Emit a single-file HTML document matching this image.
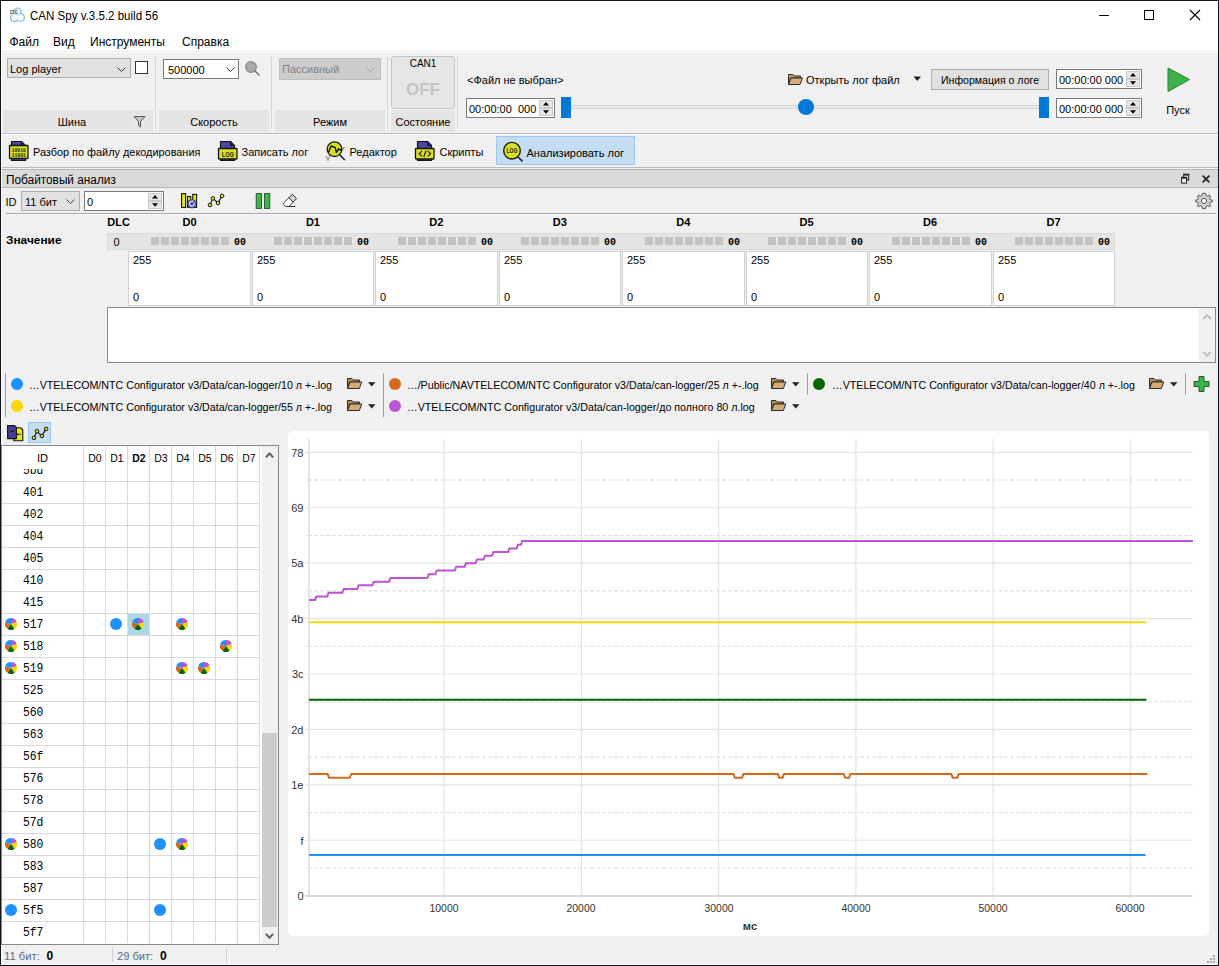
<!DOCTYPE html>
<html><head><meta charset="utf-8"><title>CAN Spy</title>
<style>
html,body{margin:0;padding:0;}
body{width:1219px;height:966px;position:relative;overflow:hidden;background:#10161c;font-family:"Liberation Sans", sans-serif;color:#000;}
.r{position:absolute;}
.t{position:absolute;white-space:pre;}
</style></head><body>

<div class="r" style="left:1px;top:1px;width:1217px;height:964px;background:#f0f0f0;"></div>
<div class="r" style="left:1px;top:1px;width:1217px;height:50px;background:#ffffff;"></div>
<div class="r" style="left:1px;top:51px;width:1217px;height:1px;background:#e9e9e9;"></div>
<div class="r" style="left:1px;top:52px;width:1217px;height:1px;background:#fcfcfc;"></div>
<svg class="r" style="left:8px;top:6px;" width="18" height="18" viewBox="0 0 18 18"><g fill="none" stroke="#6cb8ea" stroke-width="1.4">
<circle cx="9.4" cy="5.6" r="3.5"/><circle cx="6.5" cy="11.4" r="3.9"/><circle cx="12.4" cy="11.4" r="3.8"/></g>
<g fill="#fff"><circle cx="9.4" cy="5.6" r="2.8"/><circle cx="6.5" cy="11.4" r="3.2"/><circle cx="12.4" cy="11.4" r="3.1"/></g>
<text x="1.7" y="8.4" font-family="Liberation Sans" font-weight="bold" font-size="5.6" fill="#3a3a3a" stroke="#fff" stroke-width="0.6" paint-order="stroke" textLength="8.2" lengthAdjust="spacingAndGlyphs">CFG</text></svg>
<div class="t" style="left:30.00px;top:10.00px;font-size:12px;line-height:12px;transform:scaleX(0.962);transform-origin:0 0;">CAN Spy v.3.5.2 build 56</div>
<div class="r" style="left:1099px;top:15px;width:10px;height:1px;background:#000;"></div>
<div class="r" style="left:1144px;top:10px;width:10px;height:10px;border:1px solid #000;box-sizing:border-box;"></div>
<svg class="r" style="left:1189px;top:9px;" width="12" height="12" viewBox="0 0 12 12"><path d="M1 1 L11 11 M11 1 L1 11" stroke="#000" stroke-width="1.1"/></svg>
<div class="t" style="left:9.50px;top:36.00px;font-size:12px;line-height:12px;">Файл</div>
<div class="t" style="left:53.00px;top:36.00px;font-size:12px;line-height:12px;">Вид</div>
<div class="t" style="left:90.00px;top:36.00px;font-size:12px;line-height:12px;">Инструменты</div>
<div class="t" style="left:182.00px;top:36.00px;font-size:12px;line-height:12px;">Справка</div>
<div class="r" style="left:3px;top:110px;width:150px;height:22px;background:#e4e4e4;"></div>
<div class="t" style="left:72.00px;top:117.00px;font-size:11px;line-height:11px;transform:translateX(-50%);">Шина</div>
<div class="r" style="left:159px;top:110px;width:110px;height:22px;background:#e4e4e4;"></div>
<div class="t" style="left:214.00px;top:117.00px;font-size:11px;line-height:11px;transform:translateX(-50%);">Скорость</div>
<div class="r" style="left:275px;top:110px;width:110px;height:22px;background:#e4e4e4;"></div>
<div class="t" style="left:330.00px;top:117.00px;font-size:11px;line-height:11px;transform:translateX(-50%);">Режим</div>
<div class="r" style="left:391px;top:110px;width:64px;height:22px;background:#e4e4e4;"></div>
<div class="t" style="left:423.00px;top:117.00px;font-size:11px;line-height:11px;transform:translateX(-50%);">Состояние</div>
<div class="r" style="left:155px;top:57px;width:1px;height:72px;background:#d5d5d5;"></div>
<div class="r" style="left:271px;top:57px;width:1px;height:72px;background:#d5d5d5;"></div>
<div class="r" style="left:387px;top:57px;width:1px;height:72px;background:#d5d5d5;"></div>
<div class="r" style="left:457px;top:57px;width:1px;height:70px;background:#d5d5d5;"></div>
<div class="r" style="left:1px;top:133px;width:1217px;height:1px;background:#b9b9b9;"></div>
<div class="r" style="left:7px;top:58px;width:124px;height:20px;background:#e1e1e1;border:1px solid #adadad;box-sizing:border-box;"></div>
<div class="t" style="left:10.00px;top:64.00px;font-size:11px;line-height:11px;">Log player</div>
<svg class="r" style="left:117px;top:67px;" width="9" height="5" viewBox="0 0 9 5"><path d="M0.5 0.5 L4.5 4.5 L8.5 0.5" fill="none" stroke="#333" stroke-width="1"/></svg>
<div class="r" style="left:135px;top:61px;width:13px;height:13px;background:#fff;border:1px solid #333;box-sizing:border-box;"></div>
<div class="r" style="left:133px;top:114px;width:12px;height:13px;background:#e9e9e9;"></div>
<svg class="r" style="left:133px;top:115px;" width="13" height="13" viewBox="0 0 13 13"><path d="M1 1.5 H12 L7.5 6.5 V12 L5.5 10.5 V6.5 Z" fill="#c8c8c8" stroke="#555" stroke-width="1" stroke-linejoin="round"/></svg>
<div class="r" style="left:163px;top:59px;width:76px;height:20px;background:#fff;border:1px solid #7a7a7a;box-sizing:border-box;"></div>
<div class="t" style="left:168.00px;top:65.00px;font-size:11px;line-height:11px;">500000</div>
<svg class="r" style="left:226px;top:67px;" width="9" height="5" viewBox="0 0 9 5"><path d="M0.5 0.5 L4.5 4.5 L8.5 0.5" fill="none" stroke="#333" stroke-width="1"/></svg>
<svg class="r" style="left:244px;top:60px;" width="17" height="17" viewBox="0 0 17 17"><circle cx="7" cy="7" r="5.3" fill="#a9a9a9" stroke="#8a8a8a" stroke-width="1.2"/><path d="M10.8 10.8 L15.5 15.5" stroke="#777" stroke-width="1.6"/></svg>
<div class="r" style="left:279px;top:58px;width:102px;height:22px;background:#cccccc;border:1px solid #bfbfbf;box-sizing:border-box;"></div>
<div class="t" style="left:282.00px;top:64.00px;font-size:11px;line-height:11px;color:#838383;">Пассивный</div>
<svg class="r" style="left:366px;top:67px;" width="9" height="5" viewBox="0 0 9 5"><path d="M0.5 0.5 L4.5 4.5 L8.5 0.5" fill="none" stroke="#a8a8a8" stroke-width="1"/></svg>
<div class="r" style="left:391px;top:56px;width:64px;height:53px;background:#e6e6e6;border:1px solid #c4c4c4;box-sizing:border-box;border-radius:3px;"></div>
<div class="t" style="left:423.00px;top:59.00px;font-size:10px;line-height:10px;transform:translateX(-50%);">CAN1</div>
<div class="t" style="left:423.00px;top:81.00px;font-size:17px;line-height:17px;font-weight:700;color:#c4c4c4;transform:translateX(-50%);">OFF</div>
<div class="t" style="left:467.00px;top:75.00px;font-size:11px;line-height:11px;">&lt;Файл не выбран&gt;</div>
<div class="r" style="left:466px;top:98px;width:89px;height:20px;background:#fff;border:1px solid #7a7a7a;box-sizing:border-box;"></div>
<div class="t" style="left:469.00px;top:104.00px;font-size:11px;line-height:11px;">00:00:00  000</div>
<div class="r" style="left:539px;top:100px;width:14px;height:8px;background:#e6e6e6;border:1px solid #cacaca;box-sizing:border-box;"></div>
<div class="r" style="left:539px;top:108px;width:14px;height:8px;background:#e6e6e6;border:1px solid #cacaca;box-sizing:border-box;"></div>
<svg class="r" style="left:543px;top:102px;" width="6" height="4" viewBox="0 0 6 4"><path d="M0 3.5 L3 0 L6 3.5 Z" fill="#000"/></svg>
<svg class="r" style="left:543px;top:109.5px;" width="6" height="4" viewBox="0 0 6 4"><path d="M0 0.3 L3 3.8 L6 0.3 Z" fill="#000"/></svg>
<div class="r" style="left:571px;top:105px;width:468px;height:4px;background:#e7eaea;border:1px solid #d6d6d6;box-sizing:border-box;"></div>
<div class="r" style="left:561px;top:97px;width:10px;height:21px;background:#0078d7;"></div>
<div class="r" style="left:1039px;top:97px;width:10px;height:21px;background:#0078d7;"></div>
<div class="r" style="left:798px;top:99px;width:16px;height:16px;background:#0078d7;border-radius:50%;"></div>
<svg class="r" style="left:787px;top:72px;" width="17" height="14" viewBox="0 0 17 14"><path d="M1.5 2.5 H6 L7.5 4 H13.5 V6 H3.5 L1.5 12.5 Z" fill="#c69a66" stroke="#2b2b2b" stroke-width="1" stroke-linejoin="round"/><path d="M1.5 12.5 L4 6 H15.5 L13 12.5 Z" fill="#d9ac78" stroke="#2b2b2b" stroke-width="1" stroke-linejoin="round"/></svg>
<div class="t" style="left:806.00px;top:75.00px;font-size:11px;line-height:11px;">Открыть лог файл</div>
<svg class="r" style="left:913px;top:76px;" width="9" height="6" viewBox="0 0 9 6"><path d="M0.5 0.5 H8 L4.25 5 Z" fill="#222"/></svg>
<div class="r" style="left:931px;top:69px;width:118px;height:21px;background:#e1e1e1;border:1px solid #adadad;box-sizing:border-box;"></div>
<div class="t" style="left:989.50px;top:75.00px;font-size:11px;line-height:11px;transform:translateX(-50%) scaleX(0.96);">Информация о логе</div>
<div class="r" style="left:1056px;top:69px;width:86px;height:20px;background:#fff;border:1px solid #7a7a7a;box-sizing:border-box;"></div>
<div class="t" style="left:1059.00px;top:75.00px;font-size:11px;line-height:11px;">00:00:00 000</div>
<div class="r" style="left:1126px;top:71px;width:14px;height:8px;background:#e6e6e6;border:1px solid #cacaca;box-sizing:border-box;"></div>
<div class="r" style="left:1126px;top:79px;width:14px;height:8px;background:#e6e6e6;border:1px solid #cacaca;box-sizing:border-box;"></div>
<svg class="r" style="left:1130px;top:73px;" width="6" height="4" viewBox="0 0 6 4"><path d="M0 3.5 L3 0 L6 3.5 Z" fill="#000"/></svg>
<svg class="r" style="left:1130px;top:80.5px;" width="6" height="4" viewBox="0 0 6 4"><path d="M0 0.3 L3 3.8 L6 0.3 Z" fill="#000"/></svg>
<div class="r" style="left:1056px;top:98px;width:86px;height:20px;background:#fff;border:1px solid #7a7a7a;box-sizing:border-box;"></div>
<div class="t" style="left:1059.00px;top:104.00px;font-size:11px;line-height:11px;">00:00:00 000</div>
<div class="r" style="left:1126px;top:100px;width:14px;height:8px;background:#e6e6e6;border:1px solid #cacaca;box-sizing:border-box;"></div>
<div class="r" style="left:1126px;top:108px;width:14px;height:8px;background:#e6e6e6;border:1px solid #cacaca;box-sizing:border-box;"></div>
<svg class="r" style="left:1130px;top:102px;" width="6" height="4" viewBox="0 0 6 4"><path d="M0 3.5 L3 0 L6 3.5 Z" fill="#000"/></svg>
<svg class="r" style="left:1130px;top:109.5px;" width="6" height="4" viewBox="0 0 6 4"><path d="M0 0.3 L3 3.8 L6 0.3 Z" fill="#000"/></svg>
<svg class="r" style="left:1166px;top:66px;" width="26" height="28" viewBox="0 0 26 28"><path d="M2 2 L23.5 13.5 L2 25.5 Z" fill="#3cb34a" stroke="#2e7d32" stroke-width="1" stroke-linejoin="round"/></svg>
<div class="t" style="left:1178.00px;top:105.00px;font-size:11px;line-height:11px;transform:translateX(-50%);">Пуск</div>
<div class="r" style="left:1px;top:134px;width:1217px;height:1px;background:#ffffff;"></div>
<div class="r" style="left:1px;top:167px;width:1217px;height:1px;background:#b9b9b9;"></div>
<div class="r" style="left:1px;top:168px;width:1217px;height:1px;background:#f4f4f4;"></div>
<svg class="r" style="left:8px;top:140px;" width="22" height="22" viewBox="0 0 22 22"><path d="M3.5 1.5 H13.5 L17.5 5.5 V20.5 H3.5 Z" fill="#4a479c" stroke="#141414" stroke-width="1.2" stroke-linejoin="round"/>
<path d="M13.5 1.5 V5.5 H17.5" fill="#222266" stroke="#141414" stroke-width="1"/>
<rect x="1.5" y="5.5" width="18.5" height="13" fill="#d8de1f" stroke="#141414" stroke-width="1.3" rx="0.5"/><text x="10.75" y="11.6" text-anchor="middle" font-family="Liberation Mono" font-weight="bold" font-size="5.5" fill="#222" textLength="14" lengthAdjust="spacingAndGlyphs">10010</text><text x="10.75" y="16.8" text-anchor="middle" font-family="Liberation Mono" font-weight="bold" font-size="5.5" fill="#222" textLength="14" lengthAdjust="spacingAndGlyphs">11001</text></svg>
<div class="t" style="left:32.50px;top:147.00px;font-size:11px;line-height:11px;transform:scaleX(0.99);transform-origin:0 0;">Разбор по файлу декодирования</div>
<svg class="r" style="left:217px;top:140px;" width="22" height="22" viewBox="0 0 22 22"><path d="M3.5 1.5 H13.5 L17.5 5.5 V20.5 H3.5 Z" fill="#4a479c" stroke="#141414" stroke-width="1.2" stroke-linejoin="round"/>
<path d="M13.5 1.5 V5.5 H17.5" fill="#222266" stroke="#141414" stroke-width="1"/>
<rect x="1.5" y="8.5" width="18.5" height="10.5" fill="#d8de1f" stroke="#141414" stroke-width="1.3" rx="0.5"/><text x="10.75" y="17" text-anchor="middle" font-family="Liberation Sans" font-weight="bold" font-size="7" fill="#222" textLength="12" lengthAdjust="spacingAndGlyphs">LOG</text></svg>
<div class="t" style="left:241.50px;top:147.00px;font-size:11px;line-height:11px;">Записать лог</div>
<svg class="r" style="left:322px;top:138px;" width="26" height="26" viewBox="0 0 26 26"><path d="M4 18 L6 22 L8 17" fill="none" stroke="#9a9a9a" stroke-width="1.3"/>
<path d="M19 13 L22.5 9" fill="none" stroke="#9a9a9a" stroke-width="1.3"/>
<path d="M17.5 16.5 L22.8 22" stroke="#222" stroke-width="1.6"/>
<circle cx="12.5" cy="11.2" r="7.3" fill="#d9e021" stroke="#1a1a1a" stroke-width="1.3"/>
<path d="M6.3 14.5 L9.2 8 L13.4 9.6 L14.2 14.5 L16.7 11 L19.2 12" fill="none" stroke="#111" stroke-width="1.4" stroke-linejoin="round"/></svg>
<div class="t" style="left:349.50px;top:147.00px;font-size:11px;line-height:11px;">Редактор</div>
<svg class="r" style="left:414px;top:140px;" width="22" height="22" viewBox="0 0 22 22"><path d="M3.5 1.5 H13.5 L17.5 5.5 V20.5 H3.5 Z" fill="#4a479c" stroke="#141414" stroke-width="1.2" stroke-linejoin="round"/>
<path d="M13.5 1.5 V5.5 H17.5" fill="#222266" stroke="#141414" stroke-width="1"/>
<rect x="1.5" y="8.5" width="18.5" height="10.5" fill="#d8de1f" stroke="#141414" stroke-width="1.3" rx="0.5"/><path d="M8 11 L5.2 13.7 L8 16.4 M13.8 11 L16.6 13.7 L13.8 16.4 M12 10.5 L9.8 17" fill="none" stroke="#222" stroke-width="1.2"/></svg>
<div class="t" style="left:439.50px;top:147.00px;font-size:11px;line-height:11px;">Скрипты</div>
<div class="r" style="left:496px;top:136px;width:139px;height:29px;background:#c4ddf3;border:1px solid #99c9f2;box-sizing:border-box;"></div>
<svg class="r" style="left:499px;top:138px;" width="26" height="26" viewBox="0 0 26 26"><path d="M18 18 L23.5 23.3" stroke="#222" stroke-width="1.6"/>
<circle cx="13" cy="12.7" r="8.3" fill="#d9e021" stroke="#1a1a1a" stroke-width="1.4"/>
<text x="13" y="15.2" text-anchor="middle" font-family="Liberation Sans" font-weight="bold" font-size="6.5" fill="#222" textLength="11" lengthAdjust="spacingAndGlyphs">LOG</text></svg>
<div class="t" style="left:526.50px;top:148.00px;font-size:11px;line-height:11px;">Анализировать лог</div>
<div class="r" style="left:1px;top:169px;width:1217px;height:1px;background:#b4b4b4;"></div>
<div class="r" style="left:1px;top:170px;width:1217px;height:17px;background:#dadada;"></div>
<div class="r" style="left:1px;top:187px;width:1217px;height:1px;background:#b4b4b4;"></div>
<div class="t" style="left:6.40px;top:174.00px;font-size:12px;line-height:12px;transform:scaleX(0.985);transform-origin:0 0;">Побайтовый анализ</div>
<svg class="r" style="left:1180px;top:173px;" width="10" height="11" viewBox="0 0 10 11"><rect x="3.7" y="1.6" width="5" height="5.4" fill="none" stroke="#222" stroke-width="1"/><path d="M3.2 1.6 H9.2" stroke="#222" stroke-width="1.8"/><rect x="1.6" y="4.7" width="5" height="5.4" fill="#f2f2f2" stroke="#222" stroke-width="1"/><path d="M1.1 4.7 H7.1" stroke="#222" stroke-width="1.8"/></svg>
<svg class="r" style="left:1201px;top:174px;" width="10" height="10" viewBox="0 0 10 10"><path d="M1.6 1.6 L8.4 8.4 M8.4 1.6 L1.6 8.4" stroke="#222" stroke-width="1.7"/></svg>
<div class="t" style="left:5.50px;top:197.00px;font-size:11px;line-height:11px;">ID</div>
<div class="r" style="left:21px;top:191px;width:59px;height:20px;background:#e1e1e1;border:1px solid #adadad;box-sizing:border-box;"></div>
<div class="t" style="left:25.00px;top:197.00px;font-size:11px;line-height:11px;">11 бит</div>
<svg class="r" style="left:66px;top:199px;" width="9" height="5" viewBox="0 0 9 5"><path d="M0.5 0.5 L4.5 4.5 L8.5 0.5" fill="none" stroke="#444" stroke-width="1"/></svg>
<div class="r" style="left:84px;top:191px;width:80px;height:20px;background:#fff;border:1px solid #7a7a7a;box-sizing:border-box;"></div>
<div class="t" style="left:87.00px;top:197.00px;font-size:11px;line-height:11px;">0</div>
<div class="r" style="left:148px;top:193px;width:14px;height:8px;background:#e6e6e6;border:1px solid #cacaca;box-sizing:border-box;"></div>
<div class="r" style="left:148px;top:201px;width:14px;height:8px;background:#e6e6e6;border:1px solid #cacaca;box-sizing:border-box;"></div>
<svg class="r" style="left:152px;top:195px;" width="6" height="4" viewBox="0 0 6 4"><path d="M0 3.5 L3 0 L6 3.5 Z" fill="#000"/></svg>
<svg class="r" style="left:152px;top:202.5px;" width="6" height="4" viewBox="0 0 6 4"><path d="M0 0.3 L3 3.8 L6 0.3 Z" fill="#000"/></svg>
<svg class="r" style="left:178px;top:190px;" width="24" height="22" viewBox="0 0 24 22"><rect x="3.6" y="3.6" width="4" height="13.8" fill="#e8ea1a" stroke="#111" stroke-width="1.1"/>
<rect x="9.5" y="6.5" width="3.2" height="10.9" fill="#e8ea1a" stroke="#111" stroke-width="1.1"/>
<rect x="14.8" y="4.4" width="3.8" height="13" fill="#e8ea1a" stroke="#111" stroke-width="1.1"/>
<circle cx="13.9" cy="13.8" r="4.6" fill="#4545a8"/>
<path d="M16 12.6 A2.4 2.4 0 1 1 14.5 11.4" fill="none" stroke="#fff" stroke-width="1.1"/><path d="M13.8 10.3 L15.6 11.2 L14 12.6 Z" fill="#fff"/></svg>
<svg class="r" style="left:205px;top:192px;" width="22" height="17" viewBox="0 0 22 17"><path d="M5 13 L7.9 6.4 L13 11 L17.1 3.9" fill="none" stroke="#111" stroke-width="1.1"/>
<circle cx="5" cy="13" r="1.8" fill="#e8ea1a" stroke="#111" stroke-width="1"/>
<circle cx="7.9" cy="6.4" r="1.8" fill="#e8ea1a" stroke="#111" stroke-width="1"/>
<circle cx="13" cy="11" r="1.8" fill="#e8ea1a" stroke="#111" stroke-width="1"/>
<circle cx="17.1" cy="3.9" r="1.8" fill="#e8ea1a" stroke="#111" stroke-width="1"/></svg>
<svg class="r" style="left:250px;top:190px;" width="50" height="22" viewBox="0 0 50 22"><rect x="6.2" y="3.6" width="5.3" height="14.8" fill="#3cb84a" stroke="#2a4a2c" stroke-width="0.9"/>
<rect x="14.5" y="3.6" width="5.3" height="14.8" fill="#3cb84a" stroke="#2a4a2c" stroke-width="0.9"/>
<path d="M38.8 7.8 L42.3 4.3 L46.6 8.6 L43.1 12.1 Z" fill="#d0d0d0" stroke="#333" stroke-width="1"/>
<path d="M38.8 7.8 L33.7 12.9 Q33 13.6 33.7 14.5 L35.6 16.5 H39 L43.1 12.1 Z" fill="#fff" stroke="#333" stroke-width="1" stroke-linejoin="round"/>
<path d="M39 16.5 H45.5" stroke="#333" stroke-width="1"/></svg>
<svg class="r" style="left:1194px;top:191px;" width="20" height="20" viewBox="0 0 20 20"><path d="M10 2.2 L11.6 2.4 L12.1 4.6 L13.6 5.3 L15.5 4.1 L16.7 5.3 L15.5 7.2 L16.2 8.7 L18.4 9.2 V10.8 L16.2 11.3 L15.5 12.8 L16.7 14.7 L15.5 15.9 L13.6 14.7 L12.1 15.4 L11.6 17.6 H8.4 L7.9 15.4 L6.4 14.7 L4.5 15.9 L3.3 14.7 L4.5 12.8 L3.8 11.3 L1.6 10.8 V9.2 L3.8 8.7 L4.5 7.2 L3.3 5.3 L4.5 4.1 L6.4 5.3 L7.9 4.6 L8.4 2.4 Z" fill="#d2d2d2" stroke="#555" stroke-width="1" stroke-linejoin="round"/>
<circle cx="10" cy="10" r="2.6" fill="#fff" stroke="#555" stroke-width="1"/></svg>
<div class="r" style="left:6px;top:213px;width:1210px;height:1px;background:#a8a8a8;"></div>
<div class="r" style="left:6px;top:214px;width:1210px;height:1px;background:#fafafa;"></div>
<div class="t" style="left:107.30px;top:217.00px;font-size:11px;line-height:11px;font-weight:700;">DLC</div>
<div class="t" style="left:189.50px;top:217.00px;font-size:11px;line-height:11px;font-weight:700;transform:translateX(-50%);">D0</div>
<div class="t" style="left:312.93px;top:217.00px;font-size:11px;line-height:11px;font-weight:700;transform:translateX(-50%);">D1</div>
<div class="t" style="left:436.36px;top:217.00px;font-size:11px;line-height:11px;font-weight:700;transform:translateX(-50%);">D2</div>
<div class="t" style="left:559.79px;top:217.00px;font-size:11px;line-height:11px;font-weight:700;transform:translateX(-50%);">D3</div>
<div class="t" style="left:683.22px;top:217.00px;font-size:11px;line-height:11px;font-weight:700;transform:translateX(-50%);">D4</div>
<div class="t" style="left:806.65px;top:217.00px;font-size:11px;line-height:11px;font-weight:700;transform:translateX(-50%);">D5</div>
<div class="t" style="left:930.08px;top:217.00px;font-size:11px;line-height:11px;font-weight:700;transform:translateX(-50%);">D6</div>
<div class="t" style="left:1053.51px;top:217.00px;font-size:11px;line-height:11px;font-weight:700;transform:translateX(-50%);">D7</div>
<div class="t" style="left:6.00px;top:235.00px;font-size:11px;line-height:11px;font-weight:700;transform:scaleX(1.0793);transform-origin:0 0;">Значение</div>
<div class="r" style="left:107px;top:233px;width:1008px;height:17px;background:#e4e4e4;border:1px solid #dadada;box-sizing:border-box;"></div>
<div class="t" style="left:113.50px;top:237.00px;font-size:11px;line-height:11px;">0</div>
<div class="r" style="left:151px;top:237px;width:8px;height:8px;background:#c2c2c2;"></div>
<div class="r" style="left:161px;top:237px;width:8px;height:8px;background:#c2c2c2;"></div>
<div class="r" style="left:171px;top:237px;width:8px;height:8px;background:#c2c2c2;"></div>
<div class="r" style="left:181px;top:237px;width:8px;height:8px;background:#c2c2c2;"></div>
<div class="r" style="left:191px;top:237px;width:8px;height:8px;background:#c2c2c2;"></div>
<div class="r" style="left:201px;top:237px;width:8px;height:8px;background:#c2c2c2;"></div>
<div class="r" style="left:211px;top:237px;width:8px;height:8px;background:#c2c2c2;"></div>
<div class="r" style="left:221px;top:237px;width:8px;height:8px;background:#c2c2c2;"></div>
<div class="t" style="left:234.00px;top:237.00px;font-size:11px;line-height:11px;font-weight:700;font-family:'Liberation Mono', monospace;transform:scaleX(0.9089);transform-origin:0 0;">00</div>
<div class="r" style="left:274px;top:237px;width:8px;height:8px;background:#c2c2c2;"></div>
<div class="r" style="left:284px;top:237px;width:8px;height:8px;background:#c2c2c2;"></div>
<div class="r" style="left:294px;top:237px;width:8px;height:8px;background:#c2c2c2;"></div>
<div class="r" style="left:304px;top:237px;width:8px;height:8px;background:#c2c2c2;"></div>
<div class="r" style="left:314px;top:237px;width:8px;height:8px;background:#c2c2c2;"></div>
<div class="r" style="left:324px;top:237px;width:8px;height:8px;background:#c2c2c2;"></div>
<div class="r" style="left:334px;top:237px;width:8px;height:8px;background:#c2c2c2;"></div>
<div class="r" style="left:344px;top:237px;width:8px;height:8px;background:#c2c2c2;"></div>
<div class="t" style="left:357.00px;top:237.00px;font-size:11px;line-height:11px;font-weight:700;font-family:'Liberation Mono', monospace;transform:scaleX(0.9089);transform-origin:0 0;">00</div>
<div class="r" style="left:398px;top:237px;width:8px;height:8px;background:#c2c2c2;"></div>
<div class="r" style="left:408px;top:237px;width:8px;height:8px;background:#c2c2c2;"></div>
<div class="r" style="left:418px;top:237px;width:8px;height:8px;background:#c2c2c2;"></div>
<div class="r" style="left:428px;top:237px;width:8px;height:8px;background:#c2c2c2;"></div>
<div class="r" style="left:438px;top:237px;width:8px;height:8px;background:#c2c2c2;"></div>
<div class="r" style="left:448px;top:237px;width:8px;height:8px;background:#c2c2c2;"></div>
<div class="r" style="left:458px;top:237px;width:8px;height:8px;background:#c2c2c2;"></div>
<div class="r" style="left:468px;top:237px;width:8px;height:8px;background:#c2c2c2;"></div>
<div class="t" style="left:481.00px;top:237.00px;font-size:11px;line-height:11px;font-weight:700;font-family:'Liberation Mono', monospace;transform:scaleX(0.9089);transform-origin:0 0;">00</div>
<div class="r" style="left:521px;top:237px;width:8px;height:8px;background:#c2c2c2;"></div>
<div class="r" style="left:531px;top:237px;width:8px;height:8px;background:#c2c2c2;"></div>
<div class="r" style="left:541px;top:237px;width:8px;height:8px;background:#c2c2c2;"></div>
<div class="r" style="left:551px;top:237px;width:8px;height:8px;background:#c2c2c2;"></div>
<div class="r" style="left:561px;top:237px;width:8px;height:8px;background:#c2c2c2;"></div>
<div class="r" style="left:571px;top:237px;width:8px;height:8px;background:#c2c2c2;"></div>
<div class="r" style="left:581px;top:237px;width:8px;height:8px;background:#c2c2c2;"></div>
<div class="r" style="left:591px;top:237px;width:8px;height:8px;background:#c2c2c2;"></div>
<div class="t" style="left:604.00px;top:237.00px;font-size:11px;line-height:11px;font-weight:700;font-family:'Liberation Mono', monospace;transform:scaleX(0.9089);transform-origin:0 0;">00</div>
<div class="r" style="left:645px;top:237px;width:8px;height:8px;background:#c2c2c2;"></div>
<div class="r" style="left:655px;top:237px;width:8px;height:8px;background:#c2c2c2;"></div>
<div class="r" style="left:665px;top:237px;width:8px;height:8px;background:#c2c2c2;"></div>
<div class="r" style="left:675px;top:237px;width:8px;height:8px;background:#c2c2c2;"></div>
<div class="r" style="left:685px;top:237px;width:8px;height:8px;background:#c2c2c2;"></div>
<div class="r" style="left:695px;top:237px;width:8px;height:8px;background:#c2c2c2;"></div>
<div class="r" style="left:705px;top:237px;width:8px;height:8px;background:#c2c2c2;"></div>
<div class="r" style="left:715px;top:237px;width:8px;height:8px;background:#c2c2c2;"></div>
<div class="t" style="left:728.00px;top:237.00px;font-size:11px;line-height:11px;font-weight:700;font-family:'Liberation Mono', monospace;transform:scaleX(0.9089);transform-origin:0 0;">00</div>
<div class="r" style="left:768px;top:237px;width:8px;height:8px;background:#c2c2c2;"></div>
<div class="r" style="left:778px;top:237px;width:8px;height:8px;background:#c2c2c2;"></div>
<div class="r" style="left:788px;top:237px;width:8px;height:8px;background:#c2c2c2;"></div>
<div class="r" style="left:798px;top:237px;width:8px;height:8px;background:#c2c2c2;"></div>
<div class="r" style="left:808px;top:237px;width:8px;height:8px;background:#c2c2c2;"></div>
<div class="r" style="left:818px;top:237px;width:8px;height:8px;background:#c2c2c2;"></div>
<div class="r" style="left:828px;top:237px;width:8px;height:8px;background:#c2c2c2;"></div>
<div class="r" style="left:838px;top:237px;width:8px;height:8px;background:#c2c2c2;"></div>
<div class="t" style="left:851.00px;top:237.00px;font-size:11px;line-height:11px;font-weight:700;font-family:'Liberation Mono', monospace;transform:scaleX(0.9089);transform-origin:0 0;">00</div>
<div class="r" style="left:892px;top:237px;width:8px;height:8px;background:#c2c2c2;"></div>
<div class="r" style="left:902px;top:237px;width:8px;height:8px;background:#c2c2c2;"></div>
<div class="r" style="left:912px;top:237px;width:8px;height:8px;background:#c2c2c2;"></div>
<div class="r" style="left:922px;top:237px;width:8px;height:8px;background:#c2c2c2;"></div>
<div class="r" style="left:932px;top:237px;width:8px;height:8px;background:#c2c2c2;"></div>
<div class="r" style="left:942px;top:237px;width:8px;height:8px;background:#c2c2c2;"></div>
<div class="r" style="left:952px;top:237px;width:8px;height:8px;background:#c2c2c2;"></div>
<div class="r" style="left:962px;top:237px;width:8px;height:8px;background:#c2c2c2;"></div>
<div class="t" style="left:975.00px;top:237.00px;font-size:11px;line-height:11px;font-weight:700;font-family:'Liberation Mono', monospace;transform:scaleX(0.9089);transform-origin:0 0;">00</div>
<div class="r" style="left:1015px;top:237px;width:8px;height:8px;background:#c2c2c2;"></div>
<div class="r" style="left:1025px;top:237px;width:8px;height:8px;background:#c2c2c2;"></div>
<div class="r" style="left:1035px;top:237px;width:8px;height:8px;background:#c2c2c2;"></div>
<div class="r" style="left:1045px;top:237px;width:8px;height:8px;background:#c2c2c2;"></div>
<div class="r" style="left:1055px;top:237px;width:8px;height:8px;background:#c2c2c2;"></div>
<div class="r" style="left:1065px;top:237px;width:8px;height:8px;background:#c2c2c2;"></div>
<div class="r" style="left:1075px;top:237px;width:8px;height:8px;background:#c2c2c2;"></div>
<div class="r" style="left:1085px;top:237px;width:8px;height:8px;background:#c2c2c2;"></div>
<div class="t" style="left:1098.00px;top:237.00px;font-size:11px;line-height:11px;font-weight:700;font-family:'Liberation Mono', monospace;transform:scaleX(0.9089);transform-origin:0 0;">00</div>
<div class="r" style="left:128px;top:251px;width:123px;height:55px;background:#fff;border:1px solid #cfcfcf;box-sizing:border-box;"></div>
<div class="t" style="left:133.00px;top:255.00px;font-size:11px;line-height:11px;">255</div>
<div class="t" style="left:133.00px;top:292.00px;font-size:11px;line-height:11px;">0</div>
<div class="r" style="left:252px;top:251px;width:122px;height:55px;background:#fff;border:1px solid #cfcfcf;box-sizing:border-box;"></div>
<div class="t" style="left:257.00px;top:255.00px;font-size:11px;line-height:11px;">255</div>
<div class="t" style="left:257.00px;top:292.00px;font-size:11px;line-height:11px;">0</div>
<div class="r" style="left:375px;top:251px;width:123px;height:55px;background:#fff;border:1px solid #cfcfcf;box-sizing:border-box;"></div>
<div class="t" style="left:380.00px;top:255.00px;font-size:11px;line-height:11px;">255</div>
<div class="t" style="left:380.00px;top:292.00px;font-size:11px;line-height:11px;">0</div>
<div class="r" style="left:499px;top:251px;width:122px;height:55px;background:#fff;border:1px solid #cfcfcf;box-sizing:border-box;"></div>
<div class="t" style="left:504.00px;top:255.00px;font-size:11px;line-height:11px;">255</div>
<div class="t" style="left:504.00px;top:292.00px;font-size:11px;line-height:11px;">0</div>
<div class="r" style="left:622px;top:251px;width:123px;height:55px;background:#fff;border:1px solid #cfcfcf;box-sizing:border-box;"></div>
<div class="t" style="left:627.00px;top:255.00px;font-size:11px;line-height:11px;">255</div>
<div class="t" style="left:627.00px;top:292.00px;font-size:11px;line-height:11px;">0</div>
<div class="r" style="left:746px;top:251px;width:122px;height:55px;background:#fff;border:1px solid #cfcfcf;box-sizing:border-box;"></div>
<div class="t" style="left:751.00px;top:255.00px;font-size:11px;line-height:11px;">255</div>
<div class="t" style="left:751.00px;top:292.00px;font-size:11px;line-height:11px;">0</div>
<div class="r" style="left:869px;top:251px;width:123px;height:55px;background:#fff;border:1px solid #cfcfcf;box-sizing:border-box;"></div>
<div class="t" style="left:874.00px;top:255.00px;font-size:11px;line-height:11px;">255</div>
<div class="t" style="left:874.00px;top:292.00px;font-size:11px;line-height:11px;">0</div>
<div class="r" style="left:993px;top:251px;width:122px;height:55px;background:#fff;border:1px solid #cfcfcf;box-sizing:border-box;"></div>
<div class="t" style="left:998.00px;top:255.00px;font-size:11px;line-height:11px;">255</div>
<div class="t" style="left:998.00px;top:292.00px;font-size:11px;line-height:11px;">0</div>
<div class="r" style="left:107px;top:307px;width:1109px;height:56px;background:#fff;border:1px solid #828790;box-sizing:border-box;"></div>
<div class="r" style="left:1199px;top:308px;width:16px;height:54px;background:#f0f0f0;"></div>
<div class="r" style="left:5px;top:373px;width:1px;height:44px;background:#a0a0a0;"></div>
<div class="r" style="left:383px;top:373px;width:1px;height:44px;background:#a0a0a0;"></div>
<div class="r" style="left:807px;top:373px;width:1px;height:22px;background:#a0a0a0;"></div>
<div class="r" style="left:1185px;top:373px;width:1px;height:22px;background:#a0a0a0;"></div>
<div class="r" style="left:10.8px;top:377.8px;width:12.4px;height:12.4px;background:#1e90ff;border-radius:50%;"></div>
<div class="t" style="left:29.10px;top:380.00px;font-size:11px;line-height:11px;transform:scaleX(0.9699);transform-origin:0 0;">…VTELECOM/NTC Configurator v3/Data/can-logger/10 л +-.log</div>
<svg class="r" style="left:345.5px;top:377px;" width="17" height="13" viewBox="0 0 17 13"><path d="M1.5 1.5 H6 L7.5 3 H13.5 V5 H3.5 L1.5 11.5 Z" fill="#b8915f" stroke="#2b2b2b" stroke-width="1" stroke-linejoin="round"/><path d="M1.5 11.5 L4 5 H15.8 L13.3 11.5 Z" fill="#d6aa76" stroke="#2b2b2b" stroke-width="1" stroke-linejoin="round"/></svg>
<svg class="r" style="left:367.5px;top:382px;" width="8" height="5" viewBox="0 0 8 5"><path d="M0 0.3 H7.5 L3.75 4.6 Z" fill="#222"/></svg>
<div class="r" style="left:10.8px;top:399.8px;width:12.4px;height:12.4px;background:#ffd700;border-radius:50%;"></div>
<div class="t" style="left:29.10px;top:402.00px;font-size:11px;line-height:11px;transform:scaleX(0.9699);transform-origin:0 0;">…VTELECOM/NTC Configurator v3/Data/can-logger/55 л +-.log</div>
<svg class="r" style="left:345.5px;top:399px;" width="17" height="13" viewBox="0 0 17 13"><path d="M1.5 1.5 H6 L7.5 3 H13.5 V5 H3.5 L1.5 11.5 Z" fill="#b8915f" stroke="#2b2b2b" stroke-width="1" stroke-linejoin="round"/><path d="M1.5 11.5 L4 5 H15.8 L13.3 11.5 Z" fill="#d6aa76" stroke="#2b2b2b" stroke-width="1" stroke-linejoin="round"/></svg>
<svg class="r" style="left:367.5px;top:404px;" width="8" height="5" viewBox="0 0 8 5"><path d="M0 0.3 H7.5 L3.75 4.6 Z" fill="#222"/></svg>
<div class="r" style="left:388.8px;top:377.8px;width:12.4px;height:12.4px;background:#d2691e;border-radius:50%;"></div>
<div class="t" style="left:407.30px;top:380.00px;font-size:11px;line-height:11px;transform:scaleX(0.969);transform-origin:0 0;">…/Public/NAVTELECOM/NTC Configurator v3/Data/can-logger/25 л +-.log</div>
<svg class="r" style="left:769.5px;top:377px;" width="17" height="13" viewBox="0 0 17 13"><path d="M1.5 1.5 H6 L7.5 3 H13.5 V5 H3.5 L1.5 11.5 Z" fill="#b8915f" stroke="#2b2b2b" stroke-width="1" stroke-linejoin="round"/><path d="M1.5 11.5 L4 5 H15.8 L13.3 11.5 Z" fill="#d6aa76" stroke="#2b2b2b" stroke-width="1" stroke-linejoin="round"/></svg>
<svg class="r" style="left:791.5px;top:382px;" width="8" height="5" viewBox="0 0 8 5"><path d="M0 0.3 H7.5 L3.75 4.6 Z" fill="#222"/></svg>
<div class="r" style="left:388.8px;top:399.8px;width:12.4px;height:12.4px;background:#ba55d3;border-radius:50%;"></div>
<div class="t" style="left:407.30px;top:402.00px;font-size:11px;line-height:11px;transform:scaleX(0.9706);transform-origin:0 0;">…VTELECOM/NTC Configurator v3/Data/can-logger/до полного 80 л.log</div>
<svg class="r" style="left:769.5px;top:399px;" width="17" height="13" viewBox="0 0 17 13"><path d="M1.5 1.5 H6 L7.5 3 H13.5 V5 H3.5 L1.5 11.5 Z" fill="#b8915f" stroke="#2b2b2b" stroke-width="1" stroke-linejoin="round"/><path d="M1.5 11.5 L4 5 H15.8 L13.3 11.5 Z" fill="#d6aa76" stroke="#2b2b2b" stroke-width="1" stroke-linejoin="round"/></svg>
<svg class="r" style="left:791.5px;top:404px;" width="8" height="5" viewBox="0 0 8 5"><path d="M0 0.3 H7.5 L3.75 4.6 Z" fill="#222"/></svg>
<div class="r" style="left:812.8px;top:377.8px;width:12.4px;height:12.4px;background:#006400;border-radius:50%;"></div>
<div class="t" style="left:831.60px;top:380.00px;font-size:11px;line-height:11px;transform:scaleX(0.9693);transform-origin:0 0;">…VTELECOM/NTC Configurator v3/Data/can-logger/40 л +-.log</div>
<svg class="r" style="left:1147.5px;top:377px;" width="17" height="13" viewBox="0 0 17 13"><path d="M1.5 1.5 H6 L7.5 3 H13.5 V5 H3.5 L1.5 11.5 Z" fill="#b8915f" stroke="#2b2b2b" stroke-width="1" stroke-linejoin="round"/><path d="M1.5 11.5 L4 5 H15.8 L13.3 11.5 Z" fill="#d6aa76" stroke="#2b2b2b" stroke-width="1" stroke-linejoin="round"/></svg>
<svg class="r" style="left:1169.5px;top:382px;" width="8" height="5" viewBox="0 0 8 5"><path d="M0 0.3 H7.5 L3.75 4.6 Z" fill="#222"/></svg>
<svg class="r" style="left:1193px;top:375px;" width="18" height="18" viewBox="0 0 18 18"><path d="M6 1.5 H11 V6.5 H16 V11.5 H11 V16.5 H6 V11.5 H1 V6.5 H6 Z" fill="#39b54a" stroke="#2b5a30" stroke-width="1" stroke-linejoin="round"/></svg>
<svg class="r" style="left:5px;top:423px;" width="22" height="20" viewBox="0 0 22 20"><path d="M8.8 4.8 H15.8 L17.8 6.8 V17.8 H8.8 Z" fill="#e0e41a" stroke="#111" stroke-width="1.1" stroke-linejoin="round"/>
<path d="M2.6 2.6 H9.6 L11.4 4.4 V15.6 H2.6 Z" fill="#433f98" stroke="#111" stroke-width="1.1" stroke-linejoin="round"/>
<path d="M5 8.3 H8" stroke="#222" stroke-width="1.3"/><circle cx="8" cy="8.3" r="0.9" fill="#111"/>
<path d="M13.2 11.3 H16" stroke="#555" stroke-width="1.1"/><circle cx="12.8" cy="11.3" r="0.9" fill="#111"/></svg>
<div class="r" style="left:28px;top:422px;width:23px;height:21px;background:#c4ddf3;border:1px solid #99c9f2;box-sizing:border-box;"></div>
<svg class="r" style="left:28px;top:422px;" width="23" height="21" viewBox="0 0 23 21"><path d="M5.9 15.9 L9 9.3 L13.9 13.9 L18.1 6.9" fill="none" stroke="#111" stroke-width="1.1"/>
<circle cx="5.9" cy="15.9" r="1.8" fill="#d9df1e" stroke="#111" stroke-width="1"/>
<circle cx="9" cy="9.3" r="1.8" fill="#d9df1e" stroke="#111" stroke-width="1"/>
<circle cx="13.9" cy="13.9" r="1.8" fill="#d9df1e" stroke="#111" stroke-width="1"/>
<circle cx="18.1" cy="6.9" r="1.8" fill="#d9df1e" stroke="#111" stroke-width="1"/></svg>
<svg class="r" style="left:1202px;top:313px;" width="10" height="8" viewBox="0 0 10 8"><path d="M1.2 6 L5 2.2 L8.8 6" fill="none" stroke="#bcbcbc" stroke-width="1.9"/></svg>
<svg class="r" style="left:1202px;top:350px;" width="10" height="8" viewBox="0 0 10 8"><path d="M1.2 1.9 L5 5.7 L8.8 1.9" fill="none" stroke="#bcbcbc" stroke-width="1.9"/></svg>
<div class="r" style="left:1px;top:445px;width:278px;height:500px;background:#fff;border:1px solid #828790;box-sizing:border-box;"></div>
<div class="r" style="left:128px;top:614px;width:21px;height:21px;background:#add8e6;"></div>
<div class="r" style="left:2px;top:446px;width:258px;height:497px;overflow:hidden;">
<div class="r" style="left:0;top:35px;width:258px;height:1px;background:#d9d9d9"></div>
<div class="r" style="left:0;top:57px;width:258px;height:1px;background:#d9d9d9"></div>
<div class="r" style="left:0;top:79px;width:258px;height:1px;background:#d9d9d9"></div>
<div class="r" style="left:0;top:101px;width:258px;height:1px;background:#d9d9d9"></div>
<div class="r" style="left:0;top:123px;width:258px;height:1px;background:#d9d9d9"></div>
<div class="r" style="left:0;top:145px;width:258px;height:1px;background:#d9d9d9"></div>
<div class="r" style="left:0;top:167px;width:258px;height:1px;background:#d9d9d9"></div>
<div class="r" style="left:0;top:189px;width:258px;height:1px;background:#d9d9d9"></div>
<div class="r" style="left:0;top:211px;width:258px;height:1px;background:#d9d9d9"></div>
<div class="r" style="left:0;top:233px;width:258px;height:1px;background:#d9d9d9"></div>
<div class="r" style="left:0;top:255px;width:258px;height:1px;background:#d9d9d9"></div>
<div class="r" style="left:0;top:277px;width:258px;height:1px;background:#d9d9d9"></div>
<div class="r" style="left:0;top:299px;width:258px;height:1px;background:#d9d9d9"></div>
<div class="r" style="left:0;top:321px;width:258px;height:1px;background:#d9d9d9"></div>
<div class="r" style="left:0;top:343px;width:258px;height:1px;background:#d9d9d9"></div>
<div class="r" style="left:0;top:365px;width:258px;height:1px;background:#d9d9d9"></div>
<div class="r" style="left:0;top:387px;width:258px;height:1px;background:#d9d9d9"></div>
<div class="r" style="left:0;top:409px;width:258px;height:1px;background:#d9d9d9"></div>
<div class="r" style="left:0;top:431px;width:258px;height:1px;background:#d9d9d9"></div>
<div class="r" style="left:0;top:453px;width:258px;height:1px;background:#d9d9d9"></div>
<div class="r" style="left:0;top:475px;width:258px;height:1px;background:#d9d9d9"></div>
<div class="r" style="left:81px;top:0;width:1px;height:497px;background:#d9d9d9"></div>
<div class="r" style="left:103px;top:0;width:1px;height:497px;background:#d9d9d9"></div>
<div class="r" style="left:125px;top:0;width:1px;height:497px;background:#d9d9d9"></div>
<div class="r" style="left:147px;top:0;width:1px;height:497px;background:#d9d9d9"></div>
<div class="r" style="left:169px;top:0;width:1px;height:497px;background:#d9d9d9"></div>
<div class="r" style="left:191px;top:0;width:1px;height:497px;background:#d9d9d9"></div>
<div class="r" style="left:213px;top:0;width:1px;height:497px;background:#d9d9d9"></div>
<div class="r" style="left:235px;top:0;width:1px;height:497px;background:#d9d9d9"></div>
<div class="r" style="left:257px;top:0;width:1px;height:497px;background:#d9d9d9"></div>
<div class="t" style="left:21.00px;top:19.00px;font-size:12px;line-height:12px;font-family:'Liberation Mono', monospace;transform:scaleX(0.944);transform-origin:0 0;">5bd</div>
<div class="t" style="left:21.00px;top:41.00px;font-size:12px;line-height:12px;font-family:'Liberation Mono', monospace;transform:scaleX(0.944);transform-origin:0 0;">401</div>
<div class="t" style="left:21.00px;top:63.00px;font-size:12px;line-height:12px;font-family:'Liberation Mono', monospace;transform:scaleX(0.944);transform-origin:0 0;">402</div>
<div class="t" style="left:21.00px;top:85.00px;font-size:12px;line-height:12px;font-family:'Liberation Mono', monospace;transform:scaleX(0.944);transform-origin:0 0;">404</div>
<div class="t" style="left:21.00px;top:107.00px;font-size:12px;line-height:12px;font-family:'Liberation Mono', monospace;transform:scaleX(0.944);transform-origin:0 0;">405</div>
<div class="t" style="left:21.00px;top:129.00px;font-size:12px;line-height:12px;font-family:'Liberation Mono', monospace;transform:scaleX(0.944);transform-origin:0 0;">410</div>
<div class="t" style="left:21.00px;top:151.00px;font-size:12px;line-height:12px;font-family:'Liberation Mono', monospace;transform:scaleX(0.944);transform-origin:0 0;">415</div>
<div class="t" style="left:21.00px;top:173.00px;font-size:12px;line-height:12px;font-family:'Liberation Mono', monospace;transform:scaleX(0.944);transform-origin:0 0;">517</div>
<div class="t" style="left:21.00px;top:195.00px;font-size:12px;line-height:12px;font-family:'Liberation Mono', monospace;transform:scaleX(0.944);transform-origin:0 0;">518</div>
<div class="t" style="left:21.00px;top:217.00px;font-size:12px;line-height:12px;font-family:'Liberation Mono', monospace;transform:scaleX(0.944);transform-origin:0 0;">519</div>
<div class="t" style="left:21.00px;top:239.00px;font-size:12px;line-height:12px;font-family:'Liberation Mono', monospace;transform:scaleX(0.944);transform-origin:0 0;">525</div>
<div class="t" style="left:21.00px;top:261.00px;font-size:12px;line-height:12px;font-family:'Liberation Mono', monospace;transform:scaleX(0.944);transform-origin:0 0;">560</div>
<div class="t" style="left:21.00px;top:283.00px;font-size:12px;line-height:12px;font-family:'Liberation Mono', monospace;transform:scaleX(0.944);transform-origin:0 0;">563</div>
<div class="t" style="left:21.00px;top:305.00px;font-size:12px;line-height:12px;font-family:'Liberation Mono', monospace;transform:scaleX(0.944);transform-origin:0 0;">56f</div>
<div class="t" style="left:21.00px;top:327.00px;font-size:12px;line-height:12px;font-family:'Liberation Mono', monospace;transform:scaleX(0.944);transform-origin:0 0;">576</div>
<div class="t" style="left:21.00px;top:349.00px;font-size:12px;line-height:12px;font-family:'Liberation Mono', monospace;transform:scaleX(0.944);transform-origin:0 0;">578</div>
<div class="t" style="left:21.00px;top:371.00px;font-size:12px;line-height:12px;font-family:'Liberation Mono', monospace;transform:scaleX(0.944);transform-origin:0 0;">57d</div>
<div class="t" style="left:21.00px;top:393.00px;font-size:12px;line-height:12px;font-family:'Liberation Mono', monospace;transform:scaleX(0.944);transform-origin:0 0;">580</div>
<div class="t" style="left:21.00px;top:415.00px;font-size:12px;line-height:12px;font-family:'Liberation Mono', monospace;transform:scaleX(0.944);transform-origin:0 0;">583</div>
<div class="t" style="left:21.00px;top:437.00px;font-size:12px;line-height:12px;font-family:'Liberation Mono', monospace;transform:scaleX(0.944);transform-origin:0 0;">587</div>
<div class="t" style="left:21.00px;top:459.00px;font-size:12px;line-height:12px;font-family:'Liberation Mono', monospace;transform:scaleX(0.944);transform-origin:0 0;">5f5</div>
<div class="t" style="left:21.00px;top:481.00px;font-size:12px;line-height:12px;font-family:'Liberation Mono', monospace;transform:scaleX(0.944);transform-origin:0 0;">5f7</div>
</div>
<div class="r" style="left:2px;top:446px;width:258px;height:23px;background:#fff;"></div>
<div class="r" style="left:83px;top:446px;width:1px;height:23px;background:#d9d9d9;"></div>
<div class="r" style="left:105px;top:446px;width:1px;height:23px;background:#d9d9d9;"></div>
<div class="r" style="left:127px;top:446px;width:1px;height:23px;background:#d9d9d9;"></div>
<div class="r" style="left:149px;top:446px;width:1px;height:23px;background:#d9d9d9;"></div>
<div class="r" style="left:171px;top:446px;width:1px;height:23px;background:#d9d9d9;"></div>
<div class="r" style="left:193px;top:446px;width:1px;height:23px;background:#d9d9d9;"></div>
<div class="r" style="left:215px;top:446px;width:1px;height:23px;background:#d9d9d9;"></div>
<div class="r" style="left:237px;top:446px;width:1px;height:23px;background:#d9d9d9;"></div>
<div class="r" style="left:259px;top:446px;width:1px;height:23px;background:#d9d9d9;"></div>
<div class="t" style="left:42.50px;top:453.00px;font-size:11px;line-height:11px;transform:translateX(-50%);">ID</div>
<div class="t" style="left:94.50px;top:453.00px;font-size:11px;line-height:11px;transform:translateX(-50%) scaleX(0.95);">D0</div>
<div class="t" style="left:116.50px;top:453.00px;font-size:11px;line-height:11px;transform:translateX(-50%) scaleX(0.95);">D1</div>
<div class="t" style="left:138.50px;top:453.00px;font-size:11px;line-height:11px;font-weight:700;transform:translateX(-50%) scaleX(0.95);">D2</div>
<div class="t" style="left:160.50px;top:453.00px;font-size:11px;line-height:11px;transform:translateX(-50%) scaleX(0.95);">D3</div>
<div class="t" style="left:182.50px;top:453.00px;font-size:11px;line-height:11px;transform:translateX(-50%) scaleX(0.95);">D4</div>
<div class="t" style="left:204.50px;top:453.00px;font-size:11px;line-height:11px;transform:translateX(-50%) scaleX(0.95);">D5</div>
<div class="t" style="left:226.50px;top:453.00px;font-size:11px;line-height:11px;transform:translateX(-50%) scaleX(0.95);">D6</div>
<div class="t" style="left:248.50px;top:453.00px;font-size:11px;line-height:11px;transform:translateX(-50%) scaleX(0.95);">D7</div>
<svg class="r" style="left:5px;top:618px;" width="12" height="12" viewBox="0 0 12 12"><path d="M6 6 L6.00 0.00 A6 6 0 0 1 11.71 4.15 Z" fill="#ba55d3"/><path d="M6 6 L11.71 4.15 A6 6 0 0 1 9.53 10.85 Z" fill="#ffd700"/><path d="M6 6 L9.53 10.85 A6 6 0 0 1 2.47 10.85 Z" fill="#006400"/><path d="M6 6 L2.47 10.85 A6 6 0 0 1 0.29 4.15 Z" fill="#d2691e"/><path d="M6 6 L0.29 4.15 A6 6 0 0 1 6.00 0.00 Z" fill="#1e90ff"/></svg>
<svg class="r" style="left:5px;top:640px;" width="12" height="12" viewBox="0 0 12 12"><path d="M6 6 L6.00 0.00 A6 6 0 0 1 11.71 4.15 Z" fill="#ba55d3"/><path d="M6 6 L11.71 4.15 A6 6 0 0 1 9.53 10.85 Z" fill="#ffd700"/><path d="M6 6 L9.53 10.85 A6 6 0 0 1 2.47 10.85 Z" fill="#006400"/><path d="M6 6 L2.47 10.85 A6 6 0 0 1 0.29 4.15 Z" fill="#d2691e"/><path d="M6 6 L0.29 4.15 A6 6 0 0 1 6.00 0.00 Z" fill="#1e90ff"/></svg>
<svg class="r" style="left:5px;top:662px;" width="12" height="12" viewBox="0 0 12 12"><path d="M6 6 L6.00 0.00 A6 6 0 0 1 11.71 4.15 Z" fill="#ba55d3"/><path d="M6 6 L11.71 4.15 A6 6 0 0 1 9.53 10.85 Z" fill="#ffd700"/><path d="M6 6 L9.53 10.85 A6 6 0 0 1 2.47 10.85 Z" fill="#006400"/><path d="M6 6 L2.47 10.85 A6 6 0 0 1 0.29 4.15 Z" fill="#d2691e"/><path d="M6 6 L0.29 4.15 A6 6 0 0 1 6.00 0.00 Z" fill="#1e90ff"/></svg>
<svg class="r" style="left:5px;top:838px;" width="12" height="12" viewBox="0 0 12 12"><path d="M6 6 L6.00 0.00 A6 6 0 0 1 11.71 4.15 Z" fill="#ba55d3"/><path d="M6 6 L11.71 4.15 A6 6 0 0 1 9.53 10.85 Z" fill="#ffd700"/><path d="M6 6 L9.53 10.85 A6 6 0 0 1 2.47 10.85 Z" fill="#006400"/><path d="M6 6 L2.47 10.85 A6 6 0 0 1 0.29 4.15 Z" fill="#d2691e"/><path d="M6 6 L0.29 4.15 A6 6 0 0 1 6.00 0.00 Z" fill="#1e90ff"/></svg>
<div class="r" style="left:5.0px;top:904.0px;width:12px;height:12px;background:#1e90ff;border-radius:50%;"></div>
<div class="r" style="left:110.2px;top:618.0px;width:12px;height:12px;background:#1e90ff;border-radius:50%;"></div>
<svg class="r" style="left:132.2px;top:618px;" width="12" height="12" viewBox="0 0 12 12"><path d="M6 6 L6.00 0.00 A6 6 0 0 1 11.71 4.15 Z" fill="#ba55d3"/><path d="M6 6 L11.71 4.15 A6 6 0 0 1 9.53 10.85 Z" fill="#ffd700"/><path d="M6 6 L9.53 10.85 A6 6 0 0 1 2.47 10.85 Z" fill="#006400"/><path d="M6 6 L2.47 10.85 A6 6 0 0 1 0.29 4.15 Z" fill="#d2691e"/><path d="M6 6 L0.29 4.15 A6 6 0 0 1 6.00 0.00 Z" fill="#1e90ff"/></svg>
<svg class="r" style="left:176.2px;top:618px;" width="12" height="12" viewBox="0 0 12 12"><path d="M6 6 L6.00 0.00 A6 6 0 0 1 11.71 4.15 Z" fill="#ba55d3"/><path d="M6 6 L11.71 4.15 A6 6 0 0 1 9.53 10.85 Z" fill="#ffd700"/><path d="M6 6 L9.53 10.85 A6 6 0 0 1 2.47 10.85 Z" fill="#006400"/><path d="M6 6 L2.47 10.85 A6 6 0 0 1 0.29 4.15 Z" fill="#d2691e"/><path d="M6 6 L0.29 4.15 A6 6 0 0 1 6.00 0.00 Z" fill="#1e90ff"/></svg>
<svg class="r" style="left:220.2px;top:640px;" width="12" height="12" viewBox="0 0 12 12"><path d="M6 6 L6.00 0.00 A6 6 0 0 1 11.71 4.15 Z" fill="#ba55d3"/><path d="M6 6 L11.71 4.15 A6 6 0 0 1 9.53 10.85 Z" fill="#ffd700"/><path d="M6 6 L9.53 10.85 A6 6 0 0 1 2.47 10.85 Z" fill="#006400"/><path d="M6 6 L2.47 10.85 A6 6 0 0 1 0.29 4.15 Z" fill="#d2691e"/><path d="M6 6 L0.29 4.15 A6 6 0 0 1 6.00 0.00 Z" fill="#1e90ff"/></svg>
<svg class="r" style="left:176.2px;top:662px;" width="12" height="12" viewBox="0 0 12 12"><path d="M6 6 L6.00 0.00 A6 6 0 0 1 11.71 4.15 Z" fill="#ba55d3"/><path d="M6 6 L11.71 4.15 A6 6 0 0 1 9.53 10.85 Z" fill="#ffd700"/><path d="M6 6 L9.53 10.85 A6 6 0 0 1 2.47 10.85 Z" fill="#006400"/><path d="M6 6 L2.47 10.85 A6 6 0 0 1 0.29 4.15 Z" fill="#d2691e"/><path d="M6 6 L0.29 4.15 A6 6 0 0 1 6.00 0.00 Z" fill="#1e90ff"/></svg>
<svg class="r" style="left:198.2px;top:662px;" width="12" height="12" viewBox="0 0 12 12"><path d="M6 6 L6.00 0.00 A6 6 0 0 1 11.71 4.15 Z" fill="#ba55d3"/><path d="M6 6 L11.71 4.15 A6 6 0 0 1 9.53 10.85 Z" fill="#ffd700"/><path d="M6 6 L9.53 10.85 A6 6 0 0 1 2.47 10.85 Z" fill="#006400"/><path d="M6 6 L2.47 10.85 A6 6 0 0 1 0.29 4.15 Z" fill="#d2691e"/><path d="M6 6 L0.29 4.15 A6 6 0 0 1 6.00 0.00 Z" fill="#1e90ff"/></svg>
<div class="r" style="left:154.2px;top:838.0px;width:12px;height:12px;background:#1e90ff;border-radius:50%;"></div>
<svg class="r" style="left:176.2px;top:838px;" width="12" height="12" viewBox="0 0 12 12"><path d="M6 6 L6.00 0.00 A6 6 0 0 1 11.71 4.15 Z" fill="#ba55d3"/><path d="M6 6 L11.71 4.15 A6 6 0 0 1 9.53 10.85 Z" fill="#ffd700"/><path d="M6 6 L9.53 10.85 A6 6 0 0 1 2.47 10.85 Z" fill="#006400"/><path d="M6 6 L2.47 10.85 A6 6 0 0 1 0.29 4.15 Z" fill="#d2691e"/><path d="M6 6 L0.29 4.15 A6 6 0 0 1 6.00 0.00 Z" fill="#1e90ff"/></svg>
<div class="r" style="left:154.2px;top:904.0px;width:12px;height:12px;background:#1e90ff;border-radius:50%;"></div>
<div class="r" style="left:262px;top:446px;width:16px;height:498px;background:#f0f0f0;"></div>
<div class="r" style="left:262px;top:733px;width:15px;height:194px;background:#cdcdcd;"></div>
<svg class="r" style="left:265px;top:451px;" width="9" height="8" viewBox="0 0 9 8"><path d="M0.9 6.4 L4.5 2.4 L8.1 6.4" fill="none" stroke="#5a5a5a" stroke-width="2"/></svg>
<svg class="r" style="left:265px;top:932px;" width="9" height="8" viewBox="0 0 9 8"><path d="M0.9 1.8 L4.5 5.8 L8.1 1.8" fill="none" stroke="#5a5a5a" stroke-width="2"/></svg>
<div class="t" style="left:3.60px;top:951.00px;font-size:11px;line-height:11px;color:#5a6a85;transform:scaleX(1.0224);transform-origin:0 0;">11 бит:</div>
<div class="t" style="left:46.40px;top:950.00px;font-size:12px;line-height:12px;font-weight:700;">0</div>
<div class="r" style="left:112px;top:947px;width:1px;height:15px;background:#d0d0d0;"></div>
<div class="t" style="left:116.80px;top:951.00px;font-size:11px;line-height:11px;color:#5a6a85;transform:scaleX(1.0099);transform-origin:0 0;">29 бит:</div>
<div class="t" style="left:160.00px;top:950.00px;font-size:12px;line-height:12px;font-weight:700;">0</div>
<div class="r" style="left:226px;top:947px;width:1px;height:15px;background:#d0d0d0;"></div>
<div class="r" style="left:288px;top:431px;width:921px;height:505px;background:#fff;border-radius:5px;"></div>
<svg class="r" style="left:288px;top:431px;" width="921" height="505" viewBox="0 0 921 505"><path d="M17 21.30 H904.5" stroke="#e4e4e4" stroke-width="1.2"/><path d="M17 76.73 H904.5" stroke="#e4e4e4" stroke-width="1.2"/><path d="M17 132.15 H904.5" stroke="#e4e4e4" stroke-width="1.2"/><path d="M17 187.58 H904.5" stroke="#e4e4e4" stroke-width="1.2"/><path d="M17 243.00 H904.5" stroke="#e4e4e4" stroke-width="1.2"/><path d="M17 298.42 H904.5" stroke="#e4e4e4" stroke-width="1.2"/><path d="M17 353.85 H904.5" stroke="#e4e4e4" stroke-width="1.2"/><path d="M17 409.27 H904.5" stroke="#e4e4e4" stroke-width="1.2"/><path d="M18 49.01 H20" stroke="#e0e0e0" stroke-width="1.1"/><path d="M20 49.01 H904.5" stroke="#e0e0e0" stroke-width="1.1" stroke-dasharray="4 2"/><path d="M18 104.44 H20" stroke="#e0e0e0" stroke-width="1.1"/><path d="M20 104.44 H904.5" stroke="#e0e0e0" stroke-width="1.1" stroke-dasharray="4 2"/><path d="M18 159.86 H20" stroke="#e0e0e0" stroke-width="1.1"/><path d="M20 159.86 H904.5" stroke="#e0e0e0" stroke-width="1.1" stroke-dasharray="4 2"/><path d="M18 215.29 H20" stroke="#e0e0e0" stroke-width="1.1"/><path d="M20 215.29 H904.5" stroke="#e0e0e0" stroke-width="1.1" stroke-dasharray="4 2"/><path d="M18 270.71 H20" stroke="#e0e0e0" stroke-width="1.1"/><path d="M20 270.71 H904.5" stroke="#e0e0e0" stroke-width="1.1" stroke-dasharray="4 2"/><path d="M18 326.14 H20" stroke="#e0e0e0" stroke-width="1.1"/><path d="M20 326.14 H904.5" stroke="#e0e0e0" stroke-width="1.1" stroke-dasharray="4 2"/><path d="M18 381.56 H20" stroke="#e0e0e0" stroke-width="1.1"/><path d="M20 381.56 H904.5" stroke="#e0e0e0" stroke-width="1.1" stroke-dasharray="4 2"/><path d="M18 436.99 H20" stroke="#e0e0e0" stroke-width="1.1"/><path d="M20 436.99 H904.5" stroke="#e0e0e0" stroke-width="1.1" stroke-dasharray="4 2"/><path d="M156.20 8 V468.5" stroke="#e4e4e4" stroke-width="1.2"/><path d="M293.44 8 V468.5" stroke="#e4e4e4" stroke-width="1.2"/><path d="M430.68 8 V468.5" stroke="#e4e4e4" stroke-width="1.2"/><path d="M567.92 8 V468.5" stroke="#e4e4e4" stroke-width="1.2"/><path d="M705.16 8 V468.5" stroke="#e4e4e4" stroke-width="1.2"/><path d="M842.40 8 V468.5" stroke="#e4e4e4" stroke-width="1.2"/><path d="M21 8 V465" stroke="#e3e3e3" stroke-width="2"/><path d="M17 464.90 H904.5" stroke="#d9d9d9" stroke-width="2"/><path d="M21.00 169.10 L27.10 169.10 L28.30 165.41 L39.30 165.41 L40.50 161.71 L54.40 161.71 L55.60 158.02 L69.40 158.02 L70.60 154.33 L84.50 154.33 L85.70 150.64 L101.20 150.64 L102.40 146.94 L139.40 146.94 L140.60 143.25 L147.50 143.25 L148.70 139.56 L166.90 139.56 L168.10 135.86 L176.70 135.86 L177.90 132.17 L187.60 132.17 L188.80 128.48 L195.70 128.48 L196.90 124.78 L204.10 124.78 L205.30 121.09 L220.10 121.09 L221.30 117.40 L228.70 117.40 L229.90 113.71 L232.90 113.71 L234.10 110.01 L904.90 110.01" fill="none" stroke="#ba55d3" stroke-width="2" stroke-linejoin="round"/><path d="M21.00 191.20 L858.20 191.20" fill="none" stroke="#ffd700" stroke-width="2" stroke-linejoin="round"/><path d="M21.00 268.70 L858.40 268.70" fill="none" stroke="#006400" stroke-width="2" stroke-linejoin="round"/><path d="M21.00 342.90 L39.60 342.90 L41.00 346.80 L61.80 346.80 L63.20 342.90 L445.50 342.90 L446.90 346.80 L454.00 346.80 L455.40 342.90 L489.80 342.90 L491.20 346.80 L494.60 346.80 L496.00 342.90 L555.70 342.90 L557.10 346.80 L561.00 346.80 L562.40 342.90 L663.30 342.90 L664.70 346.80 L669.30 346.80 L670.70 342.90 L859.50 342.90" fill="none" stroke="#d2691e" stroke-width="2" stroke-linejoin="round"/><path d="M21.00 423.90 L857.60 423.90" fill="none" stroke="#1e90ff" stroke-width="2" stroke-linejoin="round"/></svg>
<div class="t" style="left:303.50px;top:448.00px;font-size:11px;line-height:11px;color:#333;transform:translateX(-100%);transform-origin:100% 0;">78</div>
<div class="t" style="left:303.50px;top:503.00px;font-size:11px;line-height:11px;color:#333;transform:translateX(-100%);transform-origin:100% 0;">69</div>
<div class="t" style="left:303.50px;top:558.00px;font-size:11px;line-height:11px;color:#333;transform:translateX(-100%);transform-origin:100% 0;">5a</div>
<div class="t" style="left:303.50px;top:614.00px;font-size:11px;line-height:11px;color:#333;transform:translateX(-100%);transform-origin:100% 0;">4b</div>
<div class="t" style="left:303.50px;top:669.00px;font-size:11px;line-height:11px;color:#333;transform:translateX(-100%);transform-origin:100% 0;">3c</div>
<div class="t" style="left:303.50px;top:725.00px;font-size:11px;line-height:11px;color:#333;transform:translateX(-100%);transform-origin:100% 0;">2d</div>
<div class="t" style="left:303.50px;top:780.00px;font-size:11px;line-height:11px;color:#333;transform:translateX(-100%);transform-origin:100% 0;">1e</div>
<div class="t" style="left:303.50px;top:836.00px;font-size:11px;line-height:11px;color:#333;transform:translateX(-100%);transform-origin:100% 0;">f</div>
<div class="t" style="left:303.50px;top:891.00px;font-size:11px;line-height:11px;color:#333;transform:translateX(-100%);transform-origin:100% 0;">0</div>
<div class="t" style="left:444.20px;top:903.00px;font-size:11px;line-height:11px;color:#333;transform:translateX(-50%) scaleX(0.9479);">10000</div>
<div class="t" style="left:581.44px;top:903.00px;font-size:11px;line-height:11px;color:#333;transform:translateX(-50%) scaleX(0.9479);">20000</div>
<div class="t" style="left:718.68px;top:903.00px;font-size:11px;line-height:11px;color:#333;transform:translateX(-50%) scaleX(0.9479);">30000</div>
<div class="t" style="left:855.92px;top:903.00px;font-size:11px;line-height:11px;color:#333;transform:translateX(-50%) scaleX(0.9479);">40000</div>
<div class="t" style="left:993.16px;top:903.00px;font-size:11px;line-height:11px;color:#333;transform:translateX(-50%) scaleX(0.9479);">50000</div>
<div class="t" style="left:1130.40px;top:903.00px;font-size:11px;line-height:11px;color:#333;transform:translateX(-50%) scaleX(0.9479);">60000</div>
<div class="t" style="left:750.00px;top:921.00px;font-size:11px;line-height:11px;font-weight:700;color:#333;transform:translateX(-50%) scaleX(1.0124);">мс</div>
<div class="r" style="left:1213px;top:955px;width:2px;height:2px;background:#a9a9a9;"></div>
<div class="r" style="left:1210px;top:958px;width:2px;height:2px;background:#a9a9a9;"></div>
<div class="r" style="left:1213px;top:958px;width:2px;height:2px;background:#a9a9a9;"></div>
<div class="r" style="left:1207px;top:961px;width:2px;height:2px;background:#a9a9a9;"></div>
<div class="r" style="left:1210px;top:961px;width:2px;height:2px;background:#a9a9a9;"></div>
<div class="r" style="left:1213px;top:961px;width:2px;height:2px;background:#a9a9a9;"></div>
<div class="r" style="left:1px;top:964px;width:1217px;height:1px;background:#fbfbfb;"></div>
<div class="r" style="left:1px;top:53px;width:1px;height:392px;background:#fbfbfb;"></div>
<div class="r" style="left:1px;top:945px;width:1px;height:19px;background:#fbfbfb;"></div>
</body></html>
